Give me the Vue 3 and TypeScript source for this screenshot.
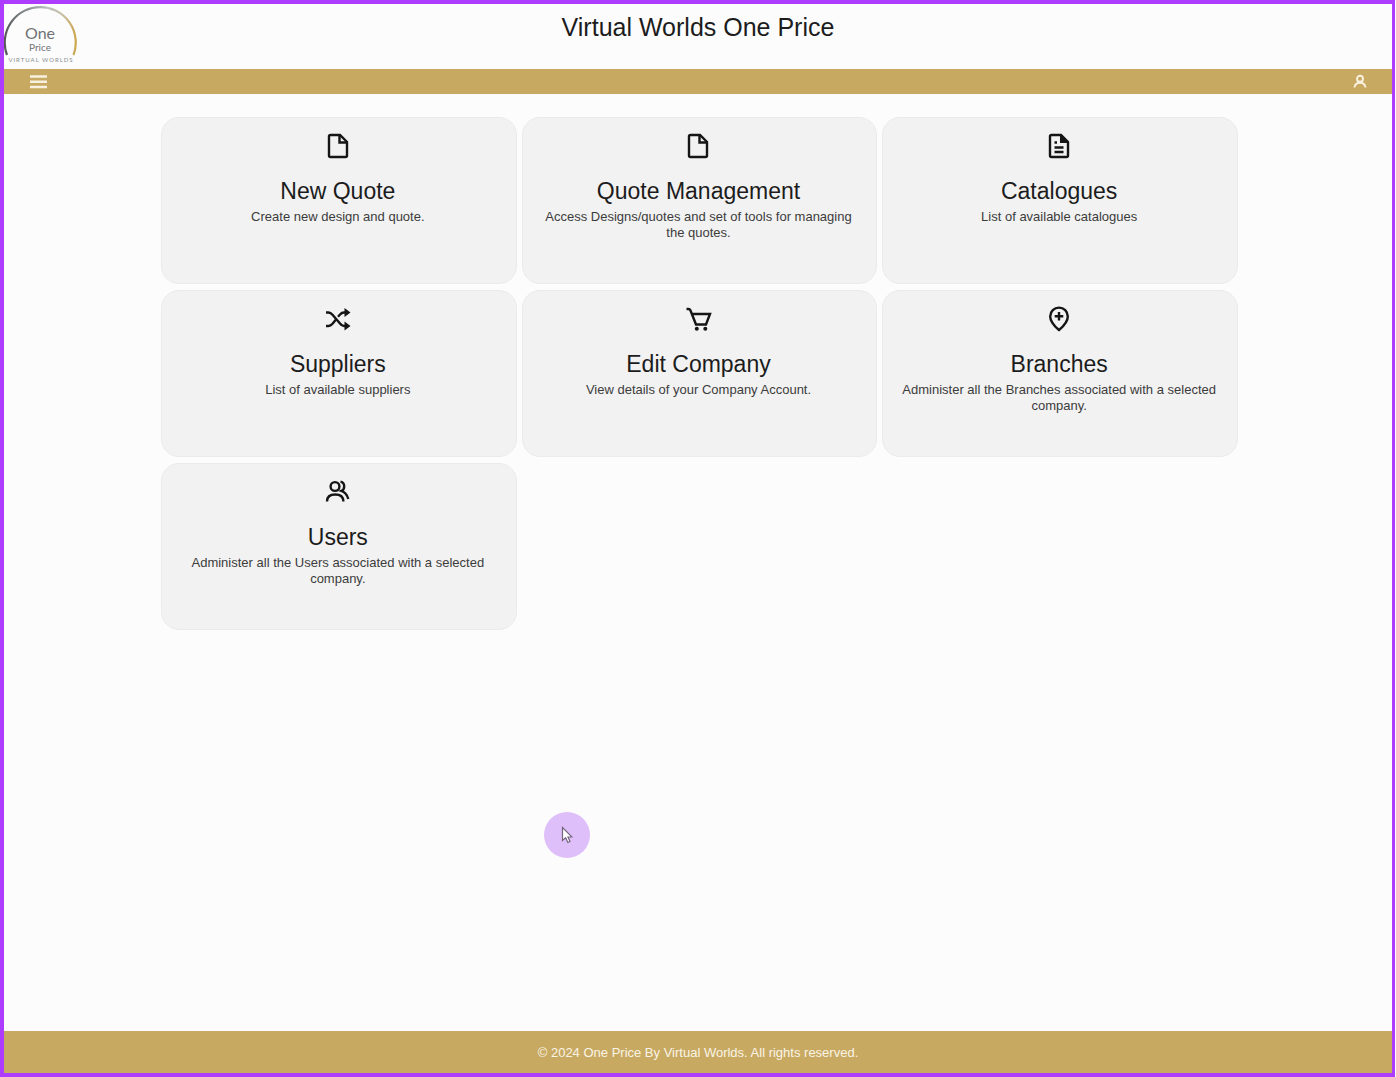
<script setup lang="ts">
type IconName = 'file' | 'document' | 'shuffle' | 'cart' | 'pin' | 'users'

interface Tile {
  title: string
  description: string
  icon: IconName
  href: string
}

const tiles: Tile[] = [
  { title: 'New Quote', description: 'Create new design and quote.', icon: 'file', href: '#new-quote' },
  {
    title: 'Quote Management',
    description: 'Access Designs/quotes and set of tools for managing the quotes.',
    icon: 'file',
    href: '#quotes',
  },
  { title: 'Catalogues', description: 'List of available catalogues', icon: 'document', href: '#catalogues' },
  { title: 'Suppliers', description: 'List of available suppliers', icon: 'shuffle', href: '#suppliers' },
  { title: 'Edit Company', description: 'View details of your Company Account.', icon: 'cart', href: '#company' },
  {
    title: 'Branches',
    description: 'Administer all the Branches associated with a selected company.',
    icon: 'pin',
    href: '#branches',
  },
  {
    title: 'Users',
    description: 'Administer all the Users associated with a selected company.',
    icon: 'users',
    href: '#users',
  },
]
</script>

<template>
  <div class="app">
    <header class="header">
      <a class="logo" href="#home" aria-label="One Price, Virtual Worlds">
        <svg viewBox="0 0 76 64" width="76" height="64" aria-hidden="true">
          <defs>
            <linearGradient id="ring" x1="0" y1="0" x2="1" y2="0">
              <stop offset="0" stop-color="#55595b" />
              <stop offset="0.35" stop-color="#8f9698" />
              <stop offset="0.6" stop-color="#b9c0c0" />
              <stop offset="0.85" stop-color="#c9bb98" />
              <stop offset="1" stop-color="#cda64d" />
            </linearGradient>
          </defs>
          <path d="M3 51A35.500 35.500 0 1 1 69.500 51" fill="none" stroke="url(#ring)" stroke-width="2.200" />
          <text x="36" y="35" class="logo-one">One</text>
          <text x="36" y="47" class="logo-price">Price</text>
          <text x="37" y="58" class="logo-sub">VIRTUAL WORLDS</text>
        </svg>
      </a>
      <h1>Virtual Worlds One Price</h1>
    </header>

    <nav class="bar" aria-label="Main">
      <button type="button" aria-label="Menu">
        <svg viewBox="0 0 18 14" width="18" height="14">
          <path d="M1 1.500h17M1 6.700h17M1 12h17" stroke="currentColor" stroke-width="2.400" />
        </svg>
      </button>
      <button type="button" aria-label="Account">
        <svg viewBox="0 0 16 16" width="16" height="16" fill="none" stroke="currentColor" stroke-width="1.900">
          <circle cx="8" cy="4.800" r="3" />
          <path d="M2.500 13.500c.3-3.300 2.300-4.800 5.500-4.800s5.200 1.500 5.500 4.800" />
        </svg>
      </button>
    </nav>

    <main class="content">
      <div class="grid">
        <a v-for="tile in tiles" :key="tile.title" class="tile" :href="tile.href">
          <svg class="icon" viewBox="0 0 30 30" width="30" height="30" aria-hidden="true">
            <g v-if="tile.icon === 'file' || tile.icon === 'document'">
              <path d="M7.500 4H17l7 7v13.500a1.500 1.500 0 0 1-1.500 1.500h-15A1.500 1.500 0 0 1 6 24.500v-19A1.500 1.500 0 0 1 7.500 4z" />
              <path v-if="tile.icon === 'file'" d="M16.500 5v6.500H23" />
              <path v-else class="fold" d="M16 4h1.500L24 10.500V12h-8z" />
              <path v-if="tile.icon === 'document'" d="M10.500 11.500h2.500M10.500 16.500h9M10.500 21h9" />
            </g>
            <g v-else-if="tile.icon === 'shuffle'">
              <path d="M3 8.500h2.500c1.800 0 2.800.8 4 2.200l7.500 8.800c1.200 1.600 2.200 2.500 4 2.500h1.500" />
              <path d="M3 22h2.500c1.800 0 2.800-.8 4-2.200l3.500-4.300M15 12.700l2-2.200c1.200-1.400 2.200-2 4-2h1.500" />
              <path class="fold" d="M21.500 4l6 4.500-6 4.500zM21.500 17.500l6 4.500-6 4.500z" />
            </g>
            <g v-else-if="tile.icon === 'cart'">
              <path d="M3.500 5h2c1 0 1.500.4 1.900 1.300L13 20.500h10L27 10H9" />
              <circle class="dot" cx="13.800" cy="24.800" r="2" />
              <circle class="dot" cx="22.300" cy="24.800" r="2" />
            </g>
            <g v-else-if="tile.icon === 'pin'">
              <path d="M15 26c-3.200-2.700-8.800-7.500-8.800-13.600a8.800 8.800 0 0 1 17.600 0C23.800 18.500 18.200 23.300 15 26z" />
              <path d="M15 8v8.600M10.700 12.300h8.600" />
            </g>
            <g v-else>
              <circle cx="12" cy="9.500" r="4.400" />
              <path d="M4 24.500c0-4.700 3-7 8.200-7s8.200 2.300 8.200 7" />
              <path d="M17.500 4.700c2.400.6 3.700 2.500 3.700 4.700 0 2-1.100 3.700-2.900 4.500 3.700 1.200 5.900 4 7 8.100" />
            </g>
          </svg>
          <h2>{{ tile.title }}</h2>
          <p>{{ tile.description }}</p>
        </a>
      </div>
    </main>

    <footer class="footer">© 2024 One Price By Virtual Worlds. All rights reserved.</footer>

    <div class="pointer" aria-hidden="true">
      <svg viewBox="0 0 12 18" width="12" height="18">
        <path d="M1.500 1.500v13l3.200-2.700 2.100 4.700 2.200-1-2-4.500h4z" fill="#fff" stroke="#75677f" stroke-width="1.200" />
      </svg>
    </div>
  </div>
</template>

<style>
body {
  margin: 0;
  background: #fcfcfc;
}
</style>

<style scoped>
.app {
  position: relative;
  box-sizing: border-box;
  display: flex;
  flex-direction: column;
  min-height: 100vh;
  margin-right: 1px;
  border: 4px solid #ae3cff;
  border-right-width: 3px;
  background: #fcfcfc;
  color: #1c1c1c;
  font-family: 'Liberation Sans', Arial, sans-serif;
}

.header {
  display: grid;
  grid-template-columns: 76px 1fr 76px;
  height: 65px;
}

.logo {
  height: 64px;
}

.logo svg {
  display: block;
}

.logo text {
  font-family: Lato, sans-serif;
  text-anchor: middle;
  fill: #707274;
}

.logo .logo-one {
  font-size: 16px;
}

.logo .logo-price {
  font-size: 10px;
}

.logo .logo-sub {
  font-size: 6px;
  letter-spacing: 1px;
  fill: #8a8c8e;
}

h1,
h2,
p {
  margin: 0;
  font-weight: 400;
}

h1 {
  padding-top: 8px;
  font-size: 25px;
  line-height: 30px;
  text-align: center;
}

.bar {
  display: flex;
  align-items: center;
  justify-content: space-between;
  height: 25px;
  padding: 0 24px 0 25px;
  background: #c8a961;
}

.bar button {
  display: flex;
  padding: 0;
  border: 0;
  background: none;
  color: #f8f1df;
  cursor: pointer;
}

.content {
  flex: 1;
  padding: 23px 16px;
}

.grid {
  box-sizing: border-box;
  display: grid;
  grid-template-columns: repeat(3, 1fr);
  gap: 6px 5px;
  max-width: 1080px;
  margin: 0 auto;
  padding-left: 3px;
}

.tile {
  box-sizing: border-box;
  display: flex;
  flex-direction: column;
  align-items: center;
  min-height: 167px;
  padding: 13px 18px 13px 16px;
  border: 1px solid #ebebeb;
  border-radius: 18px;
  background: #f2f2f2;
  color: inherit;
  text-align: center;
  text-decoration: none;
}

.icon {
  margin-bottom: 16px;
  fill: none;
  stroke: #151515;
  stroke-width: 2.4px;
}

.icon .fold,
.icon .dot {
  fill: #151515;
  stroke: none;
}

h2 {
  font-size: 23px;
  line-height: 28px;
}

p {
  margin-top: 4px;
  color: #3c3c3c;
  font-size: 13px;
  line-height: 16px;
}

.footer {
  height: 42px;
  background: #c8a961;
  color: #faf4e6;
  font-size: 13px;
  line-height: 43px;
  text-align: center;
}

.pointer {
  position: absolute;
  top: 808px;
  left: 540px;
  display: flex;
  align-items: center;
  justify-content: center;
  width: 46px;
  height: 46px;
  border-radius: 50%;
  background: #dfbffa;
  pointer-events: none;
}
</style>
